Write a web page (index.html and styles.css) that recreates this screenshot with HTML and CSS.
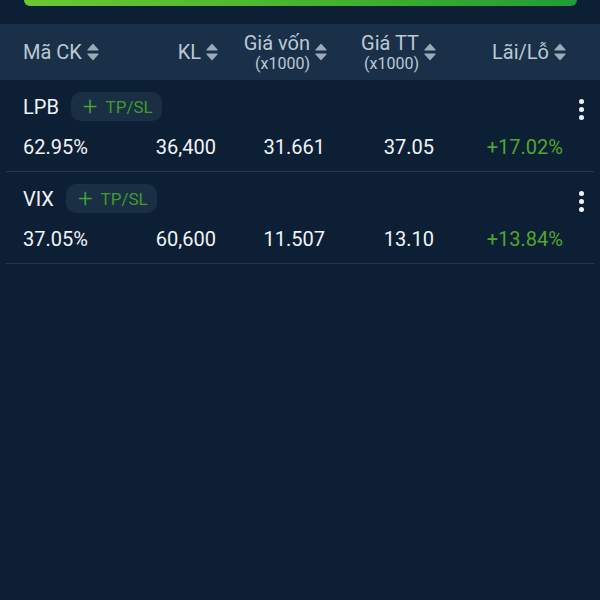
FILE: index.html
```html
<!DOCTYPE html>
<html lang="vi">
<head>
  <meta charset="UTF-8" />
  <meta name="viewport" content="width=device-width, initial-scale=1.0" />
  <title>Danh mục</title>
  <link rel="stylesheet" href="styles.css">
</head>
<body>
  <div class="top-bar"></div>

  <div class="table-head">
    <div class="th th-left">
      <span class="th-text">Mã CK</span>
      <svg class="sort" viewBox="0 0 12 18"><path d="M6 1.5 L11 7 H1 Z M1 11 H11 L6 16.5 Z"/></svg>
    </div>
    <div class="th">
      <span class="th-text">KL</span>
      <svg class="sort" viewBox="0 0 12 18"><path d="M6 1.5 L11 7 H1 Z M1 11 H11 L6 16.5 Z"/></svg>
    </div>
    <div class="th">
      <span class="th-text">Giá vốn<small>(x1000)</small></span>
      <svg class="sort" viewBox="0 0 12 18"><path d="M6 1.5 L11 7 H1 Z M1 11 H11 L6 16.5 Z"/></svg>
    </div>
    <div class="th">
      <span class="th-text">Giá TT<small>(x1000)</small></span>
      <svg class="sort" viewBox="0 0 12 18"><path d="M6 1.5 L11 7 H1 Z M1 11 H11 L6 16.5 Z"/></svg>
    </div>
    <div class="th">
      <span class="th-text">Lãi/Lỗ</span>
      <svg class="sort" viewBox="0 0 12 18"><path d="M6 1.5 L11 7 H1 Z M1 11 H11 L6 16.5 Z"/></svg>
    </div>
  </div>

  <div class="rows">
    <div class="row">
      <div class="row-top">
        <span class="symbol">LPB</span>
        <button class="tpsl"><span class="plus">+</span>TP/SL</button>
        <span class="kebab"><i></i><i></i><i></i></span>
      </div>
      <div class="row-values">
        <span class="val val-left">62.95%</span>
        <span class="val">36,400</span>
        <span class="val">31.661</span>
        <span class="val">37.05</span>
        <span class="val up">+17.02%</span>
      </div>
    </div>

    <div class="row">
      <div class="row-top">
        <span class="symbol">VIX</span>
        <button class="tpsl"><span class="plus">+</span>TP/SL</button>
        <span class="kebab"><i></i><i></i><i></i></span>
      </div>
      <div class="row-values">
        <span class="val val-left">37.05%</span>
        <span class="val">60,600</span>
        <span class="val">11.507</span>
        <span class="val">13.10</span>
        <span class="val up">+13.84%</span>
      </div>
    </div>
  </div>
</body>
</html>
```

FILE: styles.css
```css
* {
  margin: 0; padding: 0; box-sizing: border-box;
}
body {
  font-family: Roboto, 'Noto Sans', sans-serif;
  background: #0c1f35;
  color: #f1f4f7;
  width: 600px;
  height: 600px;
  overflow: hidden;
}
.top-bar {
  height: 6px;
  margin: 0 23px 0 24px;
  border-radius: 0 0 10px 10px;
  background: linear-gradient(to right, #6cc832, #3fb02f 60%, #1f9c35);
}

/* Header */
.table-head {
  margin-top: 18px;
  height: 56px;
  background: #1a3049;
  display: grid;
  grid-template-columns: 86px 109px 109px 109px 130px;
  padding: 0 34px 0 23px;
  align-items: center;
  color: #bcc8d4;
  font-size: 20px;
}
.th {
  display: flex;
  align-items: center;
  justify-content: flex-end;
  gap: 5px;
}
.th-left {
  justify-content: flex-start;
}
.th-text {
  display: flex;
  flex-direction: column;
  align-items: flex-end;
  line-height: 22px;
}
.th-text small {
  font-size: 16px;
  line-height: 19px;
}
.sort {
  width: 12px;
  height: 18px;
  fill: #9cabb9;
  stroke: #9cabb9;
  stroke-width: 1.2;
  stroke-linejoin: round;
  flex-shrink: 0;
}

/* Rows */
.row {
  margin: 0 6px;
  padding: 12px 0 12px 17px;
  border-bottom: 1px solid #22384f;
}
.row-top {
  display: flex;
  align-items: center;
  height: 29px;
}
.symbol {
  font-size: 20px;
  color: #f1f4f7;
}
.tpsl {
  margin-left: 12px;
  height: 29px;
  padding: 0 9px 0 12px;
  border: none;
  border-radius: 10px;
  background: #1b2f44;
  color: #3f9b2d;
  font-family: Roboto, sans-serif;
  font-size: 17px;
  display: flex;
  align-items: center;
  gap: 8px;
}
.plus {
  font-size: 26px;
  font-weight: 300;
  line-height: 1;
  color: #46a532;
  margin-top: -2px;
}
.kebab {
  margin-left: auto;
  margin-right: 10px;
  margin-top: 6px;
  display: flex;
  flex-direction: column;
  gap: 3px;
}
.kebab i {
  display: block;
  width: 5px;
  height: 5px;
  border-radius: 50%;
  background: #f1f4f7;
}
.row-values {
  margin-top: 14px;
  display: grid;
  grid-template-columns: 86px 109px 109px 109px 130px;
  line-height: 24px;
  font-size: 20px;
}
.val {
  text-align: right;
  padding-right: 2px;
}
.val-left {
  text-align: left;
}
.up {
  color: #4fa52d;
  padding-right: 3px;
}
```
